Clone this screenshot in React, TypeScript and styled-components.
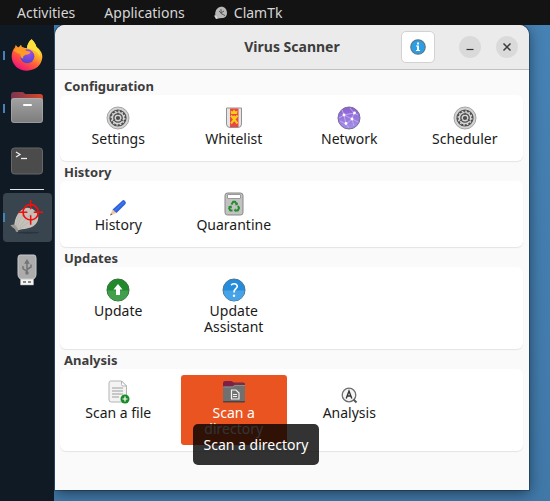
import React from "react";
import styled, { createGlobalStyle } from "styled-components";

const GlobalStyle = createGlobalStyle`
  *, *::before, *::after { box-sizing: border-box; }
  body {
    margin: 0;
    font-family: "Noto Sans", "Open Sans", sans-serif;
    font-size: 14px;
    line-height: 16px;
    color: #1c1c1c;
  }
  button { font: inherit; color: inherit; border: 0; background: none; padding: 0; margin: 0; }
  svg { display: block; flex: none; }
`;

const Screen = styled.div`
  min-height: 100vh;
  display: flex;
  flex-direction: column;
  background: linear-gradient(180deg, #4682b4, #4078a8);
`;

const TopBar = styled.nav`
  position: relative;
  z-index: 1;
  height: 25px;
  flex: none;
  display: flex;
  align-items: center;
  gap: 29px;
  padding: 0 17px;
  background: #131313;
  color: #d6d6d6;
`;

const MenuButton = styled.button`
  display: flex;
  align-items: center;
  gap: 6px;
`;

const Desktop = styled.div`
  flex: 1;
  display: flex;
`;

const Dock = styled.aside`
  position: relative;
  z-index: 1;
  width: 54px;
  flex: none;
  display: flex;
  flex-direction: column;
  padding-top: 4px;
  background: #0f1a24;
`;

const DockButton = styled.button<{ $running?: boolean }>`
  position: relative;
  height: 53px;
  display: flex;
  align-items: center;
  justify-content: center;
  padding: 2px 2px 2px 3px;

  &::before {
    content: "";
    display: ${(p) => (p.$running ? "block" : "none")};
    position: absolute;
    left: 3px;
    top: 22px;
    width: 2px;
    height: 9px;
    background: #4682b4;
  }
`;

const DockTile = styled.span<{ $active?: boolean }>`
  width: 49px;
  height: 49px;
  display: flex;
  align-items: center;
  justify-content: center;
  padding-right: 1px;
  padding-bottom: 1px;
  border-radius: 4px;
  background: ${(p) => (p.$active ? "#38444e" : "transparent")};
`;

const DockRule = styled.hr`
  width: 34px;
  height: 1px;
  margin: 1px auto;
  border: 0;
  background: #e4e6e8;
`;

const Window = styled.main`
  flex: 1;
  display: flex;
  flex-direction: column;
  margin: 0 21px 11px 1px;
  border-radius: 10px 10px 0 0;
  background: #fafafa;
  box-shadow: 0 0 0 1px rgba(0, 0, 0, 0.25), 0 3px 14px rgba(0, 0, 0, 0.5);
`;

const Header = styled.header`
  height: 45px;
  display: grid;
  grid-template-columns: 1fr auto 1fr;
  align-items: center;
  padding: 0 11px;
  border-radius: 10px 10px 0 0;
  border-bottom: 1px solid #c0c0c0;
  background: #ebebeb;
`;

const WindowTitle = styled.h1`
  grid-column: 2;
  margin: 0;
  font-size: 14px;
  font-weight: 700;
  color: #3d3d3d;
`;

const HeaderActions = styled.div`
  display: flex;
  align-items: center;
  justify-content: flex-end;
  gap: 15px;
`;

const InfoButton = styled.button`
  width: 34px;
  height: 32px;
  margin-right: 9px;
  display: flex;
  align-items: center;
  justify-content: center;
  border: 1px solid #d2d2d2;
  border-radius: 5px;
  background: #fff;
`;

const RoundButton = styled.button`
  width: 22px;
  height: 22px;
  display: flex;
  align-items: center;
  justify-content: center;
  border-radius: 50%;
  background: #dadada;
`;

const Content = styled.div`
  padding: 5px 6px 39px 5px;
`;

const SectionTitle = styled.h2`
  height: 20px;
  margin: 0;
  padding: 3px 0 0 4px;
  font-size: 13px;
  line-height: 17px;
  font-weight: 700;
  color: #3d3d3d;
`;

const Card = styled.div`
  display: grid;
  grid-template-columns: repeat(4, minmax(0, 1fr));
  gap: 9px;
  padding: 6px 5px;
  border-radius: 6px;
  background: #fff;
  box-shadow: 0 1px 1px rgba(0, 0, 0, 0.09);
`;

const Tile = styled.button<{ $selected?: boolean }>`
  position: relative;
  display: flex;
  flex-direction: column;
  align-items: center;
  gap: 1px;
  padding: 5px 12px 8px;
  border-radius: 3px;
  line-height: 16px;
  background: ${(p) => (p.$selected ? "#e95420" : "transparent")};
  color: ${(p) => (p.$selected ? "#fff" : "#1a1a1a")};
`;

const Tooltip = styled.span`
  position: absolute;
  left: 12px;
  top: 49px;
  padding: 12px 11px;
  border-radius: 5px;
  line-height: 17px;
  white-space: nowrap;
  color: #fff;
  background: rgba(0, 0, 0, 0.8);
`;

const FirefoxIcon = () => (
  <svg width="32" height="32" viewBox="0 0 96 96" aria-hidden="true">
    <defs>
      <linearGradient id="fxBody" x1="0.8" y1="0.05" x2="0.25" y2="0.95">
        <stop offset="0" stopColor="#fff04a" />
        <stop offset="0.35" stopColor="#ffb52b" />
        <stop offset="0.65" stopColor="#ff5a38" />
        <stop offset="1" stopColor="#f0147c" />
      </linearGradient>
      <radialGradient id="fxCore" cx="0.6" cy="0.25" r="0.8">
        <stop offset="0" stopColor="#a14bf2" />
        <stop offset="1" stopColor="#4b46c8" />
      </radialGradient>
    </defs>
    <path d="M62 1c8 8 12 15 14 22 12 9 19 20 18 32-2 24-21 40-46 40C23 95 3 78 2 53c0-12 4-22 10-28l2-7 8 8 8-9 4 10c5-1 11 0 14 1 1-11 5-20 14-27z" fill="url(#fxBody)" />
    <circle cx="49" cy="52" r="21" fill="url(#fxCore)" />
    <path d="M8 34c8-9 18-12 29-9l8 10 14 3c-1 6-7 8-14 9-8 2-10 6-8 12-8-2-11-8-9-14-7-1-14-4-20-11z" fill="#ff9a26" />
    <path d="M62 1c8 8 12 15 14 22 8 8 12 17 10 30-3-9-8-15-16-18-7-5-15-6-22-7 1-11 5-20 14-27z" fill="#ffdf3c" />
  </svg>
);

const FilesIcon = () => (
  <svg width="32" height="32" viewBox="0 0 32 32" aria-hidden="true">
    <defs>
      <linearGradient id="filesBack" x1="0" x2="1">
        <stop offset="0" stopColor="#7b3550" />
        <stop offset="1" stopColor="#d4492a" />
      </linearGradient>
      <linearGradient id="filesFront" x1="0" y1="0" x2="0" y2="1">
        <stop offset="0" stopColor="#a2a2a2" />
        <stop offset="1" stopColor="#7d7d7d" />
      </linearGradient>
    </defs>
    <path d="M0 3q0-3 3-3h8q2 0 3 2h15q3 0 3 3v12H0z" fill="url(#filesBack)" />
    <rect y="6" width="32" height="25" rx="3" fill="url(#filesFront)" />
    <rect x="0.5" y="6.5" width="31" height="24" rx="3" fill="none" stroke="#b5b5b5" strokeOpacity="0.5" />
    <rect x="12" y="12" width="9" height="2" rx="1" fill="#fff" />
  </svg>
);

const TerminalIcon = () => (
  <svg width="32" height="28" viewBox="0 0 32 28" aria-hidden="true">
    <rect x="0.5" y="1" width="31" height="26" rx="3" fill="#4b4b4b" stroke="#666" />
    <path d="M5 5l4 2.500-4 2.500" fill="none" stroke="#eee" strokeWidth="1.300" />
    <path d="M10 11.500h6" stroke="#eee" strokeWidth="1.300" />
  </svg>
);

const ClamIcon = () => (
  <svg width="36" height="38" viewBox="0 0 108 114" aria-hidden="true">
    <ellipse cx="58" cy="104" rx="32" ry="3" fill="#2a343c" />
    <path d="M17 92C13 70 24 42 44 32c18-8 38 5 43 20 3 15-4 26-14 33-10 5-22 8-34 9l-12 3z" fill="#c4c2bb" />
    <path d="M4 82l13-3 11 15-1 8-6-1-3-8-8-5z" fill="#9c9a92" />
    <path d="M22 88C22 66 30 46 42 37M26 91c2-22 14-42 27-55M30 93c8-18 22-34 40-47M32 93c14-12 30-24 50-32" fill="none" stroke="#aba9a1" strokeWidth="1.500" />
    <circle cx="65" cy="43" r="23" fill="none" stroke="#f40f0f" strokeWidth="5" />
    <path d="M65 6v28M65 52v28M28 43h27M74 43h28" stroke="#f40f0f" strokeWidth="4.500" />
  </svg>
);

const UsbIcon = () => (
  <svg width="20" height="32" viewBox="0 0 20 32" aria-hidden="true">
    <path d="M3.500 24h13v7h-13z" fill="#f4f4f4" stroke="#aaa" strokeWidth="0.500" />
    <path d="M6 27h3v2H6zM11 27h3v2h-3z" fill="#888" />
    <path d="M3 1h14q2 0 2 3v16q0 5-4 5H5q-4 0-4-5V4q0-3 2-3z" fill="#acacac" stroke="#c9c9c9" />
    <g fill="none" stroke="#747474" strokeWidth="1.500">
      <path d="M10 8v11M10 17.500l-4-3V12M10 15.500l4-2.500v-2.500" />
      <path d="M8.500 9L10 6.500 11.500 9z" fill="#747474" />
      <circle cx="10" cy="19" r="1" />
    </g>
  </svg>
);

const MiniClamIcon = () => (
  <svg width="14" height="14" viewBox="0 0 14 14" aria-hidden="true">
    <path d="M2 12C0 7 2 2 6 1c4-1 7 2 7 6 0 3-2 5-5 5l-4 .500z" fill="#b9b9b9" />
    <path d="M0 9.500l2 0 2 3-2 .500z" fill="#ddd" />
    <path d="M7 3v4.500l4 2M7 7l3-2M5 5l2 2" fill="none" stroke="#555" />
  </svg>
);

const InfoIcon = () => (
  <svg width="16" height="16" viewBox="0 0 16 16" aria-hidden="true">
    <circle cx="8" cy="8" r="7.200" fill="#2c9fe4" stroke="#5b7688" strokeWidth="1.200" />
    <path d="M7 3.500h2v2H7zM6 6.500h3v4.500h1v1H6v-1h1V7.500H6z" fill="#fff" />
  </svg>
);

const MinimizeIcon = () => (
  <svg width="10" height="10" viewBox="0 0 10 10" aria-hidden="true">
    <path d="M1.500 7.500h7" stroke="#333" strokeWidth="1.200" />
  </svg>
);

const CloseIcon = () => (
  <svg width="10" height="10" viewBox="0 0 10 10" aria-hidden="true">
    <path d="M1.500 1.500l7 7M8.500 1.500l-7 7" stroke="#3a3a3a" strokeWidth="1.500" />
  </svg>
);

const GearIcon = () => (
  <svg width="24" height="24" viewBox="0 0 24 24" aria-hidden="true">
    <circle cx="12" cy="12" r="11" fill="#d3d3d3" stroke="#a5a5a5" />
    <circle cx="12" cy="12" r="8.600" fill="#4d4d4d" />
    <circle cx="12" cy="12" r="5.600" fill="none" stroke="#d6d6d6" strokeWidth="1.500" />
    <circle cx="12" cy="12" r="6.800" fill="none" stroke="#d6d6d6" strokeWidth="1.300" strokeDasharray="1.700 1.860" />
    <circle cx="12" cy="12" r="2.800" fill="none" stroke="#d6d6d6" strokeWidth="1.400" />
    <path d="M12 9V6.500M14.800 13.600l2 1.200M9.200 13.600l-2 1.200" stroke="#4d4d4d" strokeWidth="1.200" />
  </svg>
);

const WhitelistIcon = () => (
  <svg width="24" height="24" viewBox="0 0 24 24" aria-hidden="true">
    <path d="M4.500 2h15v16q0 3.500-3.500 3.500H8Q4.500 21.500 4.500 18z" fill="#e4e4e4" stroke="#929292" />
    <path d="M8 2.500h8.500V21H8z" fill="#ee4545" />
    <path d="M8.500 4.500l2 1 1.500-2 1.500 2 2-1-.500 3.500H9z" fill="#f6cf16" />
    <path d="M9 9.500l6.500 8M15.500 9.500l-6.500 8" fill="none" stroke="#f6cf16" strokeWidth="2" />
    <circle cx="12.200" cy="11" r="1.600" fill="#f6cf16" />
  </svg>
);

const NetworkIcon = () => (
  <svg width="24" height="24" viewBox="0 0 24 24" aria-hidden="true">
    <defs>
      <linearGradient id="netFill" x1="0" y1="0" x2="0" y2="1">
        <stop offset="0" stopColor="#8d5fd0" />
        <stop offset="1" stopColor="#a291ea" />
      </linearGradient>
    </defs>
    <circle cx="12" cy="12" r="11" fill="url(#netFill)" stroke="#77709a" />
    <path d="M2 12l5-3 8 4 2-6 4 2M7 9L5 4M17 7l-4-5M15 13l-6 5-6-3M15 13l6 3M9 18l3 4M9 18L7 9l10-2M15 13l2 7" fill="none" stroke="#c8b4f4" strokeWidth="0.800" />
    <g fill="#fff">
      <circle cx="7" cy="9" r="1.400" />
      <circle cx="17.500" cy="7" r="1.400" />
      <circle cx="15" cy="13" r="1.400" />
      <circle cx="9" cy="17.500" r="1.400" />
    </g>
  </svg>
);

const PencilIcon = () => (
  <svg width="24" height="24" viewBox="0 0 24 24" aria-hidden="true">
    <path d="M4 23.500l2.500-6 4 3.500z" fill="#edc9a2" />
    <path d="M4 23.500l1-2.300 1.500 1.300z" fill="#6d6256" />
    <path d="M6.500 17.500L16.500 8.500q1-1 2.500.500t.500 3L10.500 21z" fill="#2f63dc" />
    <path d="M8.500 19l9.500-9" stroke="#4378ea" strokeWidth="1.200" />
  </svg>
);

const QuarantineIcon = () => (
  <svg width="24" height="24" viewBox="0 0 24 24" aria-hidden="true">
    <rect x="3" y="1" width="18" height="22" rx="2.500" fill="#c2c2c2" stroke="#878787" />
    <rect x="5.500" y="2.500" width="13" height="4" rx="0.500" fill="#fff" stroke="#888" strokeWidth="0.800" />
    <g fill="none" stroke="#248b2d" strokeWidth="2">
      <path d="M9.500 12.500l1.700-2.700h1.900l1.400 2.200M16 14l1 2-1.200 2.400H13.200M10.500 18.400H8.300L7.200 16.300 8.200 14.500" />
    </g>
    <path d="M15.800 10.300v3h-3zM13.700 16.300v4l-2-2zM6 14.300l3.500-.800.500 3z" fill="#248b2d" />
  </svg>
);

const UpdateIcon = () => (
  <svg width="24" height="24" viewBox="0 0 24 24" aria-hidden="true">
    <circle cx="12" cy="12" r="11" fill="#1f8a2b" stroke="#3c6e40" />
    <path d="M1.500 12.500h21A10.500 10.500 0 0 1 1.500 12.500z" fill="#429f4b" />
    <path d="M12 6l4.500 5.500H14V17h-4v-5.500H7.500z" fill="#fff" />
  </svg>
);

const HelpIcon = () => (
  <svg width="24" height="24" viewBox="0 0 24 24" aria-hidden="true">
    <circle cx="12" cy="12" r="11" fill="#258cdc" stroke="#4b7695" />
    <path d="M1.500 12.500h21A10.500 10.500 0 0 1 1.500 12.500z" fill="#48a3e6" />
    <path d="M9 7q3-2 5.200-.700 2.300 1.800-.200 4.200-2 1.500-2 4" fill="none" stroke="#fff" strokeWidth="1.600" />
    <circle cx="12" cy="17.700" r="1.200" fill="#fff" />
  </svg>
);

const ScanFileIcon = () => (
  <svg width="24" height="24" viewBox="0 0 24 24" aria-hidden="true">
    <path d="M4.500 1h11l5 5v14q0 2-2 2h-13q-2.500 0-2.500-2V3q0-2 1.500-2z" fill="#f3f3f3" stroke="#b4b4b4" />
    <path d="M15.500 1v3.500q0 1.500 1.500 1.500h3.500z" fill="#fff" stroke="#b4b4b4" />
    <path d="M6 8h11M6 11h11M6 14h11M6 17h7" stroke="#9d9d9d" />
    <circle cx="19" cy="19" r="4.500" fill="#188a27" />
    <path d="M19 16.500v5M16.500 19h5" stroke="#fff" strokeWidth="1.200" />
  </svg>
);

const ScanFolderIcon = () => (
  <svg width="24" height="24" viewBox="0 0 24 24" aria-hidden="true">
    <path d="M1 3q0-2 2-2h6q1.500 0 2.500 1.500H21q2 0 2 2V12H1z" fill="#7d2048" />
    <path d="M13 3h8q2 0 2 2v3H11z" fill="#713346" />
    <path d="M1 8q0-1.500 1.500-1.500H10L12.500 5H22q1 0 1 1v16H1z" fill="#707070" />
    <path d="M1 7h9.500L13 5.500h10" fill="none" stroke="#8b8b8b" />
    <rect x="1" y="21" width="22" height="1.500" rx="0.700" fill="#4e4340" />
    <path d="M9.500 10h4.500l3 3v6H9.500z" fill="none" stroke="#f2f2f2" strokeWidth="1.200" />
    <path d="M11 14.500h4M11 16.500h4" stroke="#f2f2f2" />
  </svg>
);

const AnalysisIcon = () => (
  <svg width="24" height="24" viewBox="0 0 24 24" aria-hidden="true">
    <circle cx="12" cy="15" r="6.800" fill="#f5f5f5" stroke="#6e6e6e" strokeWidth="1.300" />
    <path d="M16.500 19.500l3 3" stroke="#555" strokeWidth="2" />
    <path d="M9.200 18.500l2.800-7.500 2.800 7.500M10.200 16h3.600" fill="none" stroke="#333" strokeWidth="1.400" />
  </svg>
);

type Entry = { label: string; icon: React.ReactNode; tip?: string };

const sections: { title: string; entries: Entry[] }[] = [
  {
    title: "Configuration",
    entries: [
      { label: "Settings", icon: <GearIcon /> },
      { label: "Whitelist", icon: <WhitelistIcon /> },
      { label: "Network", icon: <NetworkIcon /> },
      { label: "Scheduler", icon: <GearIcon /> },
    ],
  },
  {
    title: "History",
    entries: [
      { label: "History", icon: <PencilIcon /> },
      { label: "Quarantine", icon: <QuarantineIcon /> },
    ],
  },
  {
    title: "Updates",
    entries: [
      { label: "Update", icon: <UpdateIcon /> },
      { label: "Update Assistant", icon: <HelpIcon /> },
    ],
  },
  {
    title: "Analysis",
    entries: [
      { label: "Scan a file", icon: <ScanFileIcon /> },
      { label: "Scan a directory", icon: <ScanFolderIcon />, tip: "Scan a directory" },
      { label: "Analysis", icon: <AnalysisIcon /> },
    ],
  },
];

export default function App() {
  return (
    <Screen>
      <GlobalStyle />
      <TopBar>
        <MenuButton>Activities</MenuButton>
        <MenuButton>Applications</MenuButton>
        <MenuButton>
          <MiniClamIcon />
          ClamTk
        </MenuButton>
      </TopBar>
      <Desktop>
        <Dock>
          <DockButton $running aria-label="Firefox"><DockTile><FirefoxIcon /></DockTile></DockButton>
          <DockButton $running aria-label="Files"><DockTile><FilesIcon /></DockTile></DockButton>
          <DockButton aria-label="Terminal"><DockTile><TerminalIcon /></DockTile></DockButton>
          <DockRule />
          <DockButton $running aria-label="ClamTk"><DockTile $active><ClamIcon /></DockTile></DockButton>
          <DockButton aria-label="USB drive"><DockTile><UsbIcon /></DockTile></DockButton>
        </Dock>
        <Window>
          <Header>
            <WindowTitle>Virus Scanner</WindowTitle>
            <HeaderActions>
              <InfoButton aria-label="About"><InfoIcon /></InfoButton>
              <RoundButton aria-label="Minimize"><MinimizeIcon /></RoundButton>
              <RoundButton aria-label="Close"><CloseIcon /></RoundButton>
            </HeaderActions>
          </Header>
          <Content>
            {sections.map((section) => (
              <section key={section.title}>
                <SectionTitle>{section.title}</SectionTitle>
                <Card>
                  {section.entries.map((entry) => (
                    <Tile key={entry.label} $selected={Boolean(entry.tip)}>
                      {entry.icon}
                      <span>{entry.label}</span>
                      {entry.tip && <Tooltip role="tooltip">{entry.tip}</Tooltip>}
                    </Tile>
                  ))}
                </Card>
              </section>
            ))}
          </Content>
        </Window>
      </Desktop>
    </Screen>
  );
}
